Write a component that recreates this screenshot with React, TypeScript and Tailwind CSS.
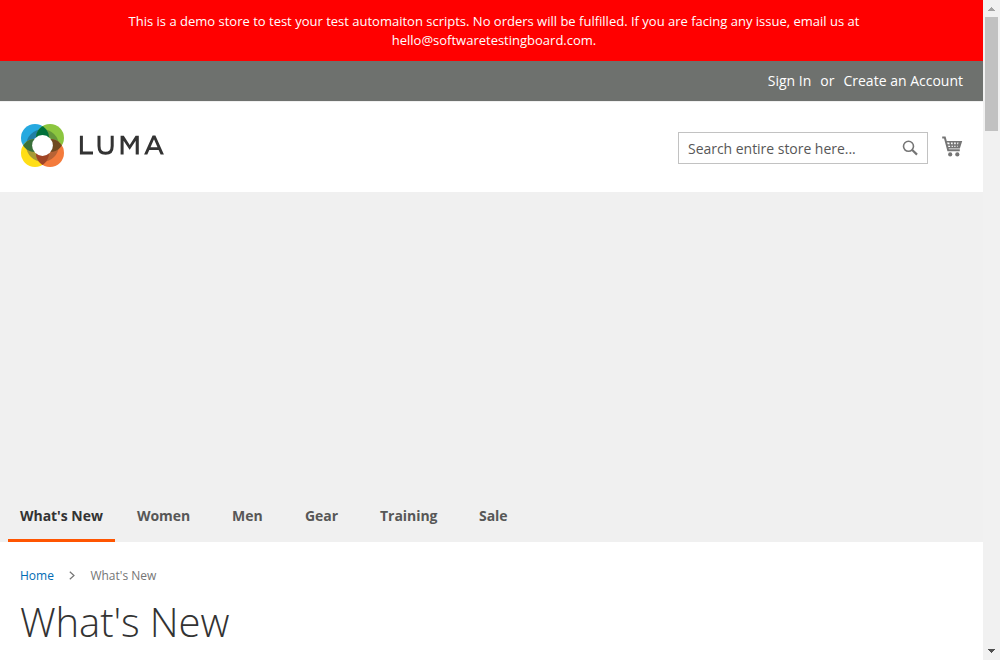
import React from 'react';

const nav = [
  { label: "What's New", className: 'w-[107px] border-b-[3px] border-[#ff5501] text-[#333]' },
  { label: 'Women', className: 'ml-[10px] w-[77px] border-b-[3px] border-transparent text-[#575757]' },
  { label: 'Men', className: 'ml-[18px] w-[55px] border-b-[3px] border-transparent text-[#575757]' },
  { label: 'Gear', className: 'ml-[18px] w-[57px] border-b-[3px] border-transparent text-[#575757]' },
  { label: 'Training', className: 'ml-[18px] w-[81px] border-b-[3px] border-transparent text-[#575757]' },
  { label: 'Sale', className: 'ml-[18px] w-[54px] border-b-[3px] border-transparent text-[#575757]' },
];

function Logo() {
  return (
    <svg className="mt-[22px]" width="148" height="46" viewBox="0 0 148 46">
      <defs>
        <clipPath id="tl"><circle cx="15" cy="15" r="14" /></clipPath>
        <clipPath id="br"><circle cx="30" cy="30" r="14" /></clipPath>
        <clipPath id="ring"><circle cx="22.5" cy="22.5" r="16.3" /></clipPath>
      </defs>
      <circle cx="15" cy="15" r="14" fill="#26a9e0" />
      <circle cx="30" cy="15" r="14" fill="#8cc63f" />
      <circle cx="15" cy="30" r="14" fill="#ffde17" />
      <circle cx="30" cy="30" r="14" fill="#f47b3c" />
      <g clipPath="url(#ring)">
        <circle cx="15" cy="15" r="14" fill="#217fa4" />
        <circle cx="30" cy="15" r="14" fill="#65973a" />
        <circle cx="15" cy="30" r="14" fill="#a79a35" />
        <circle cx="30" cy="30" r="14" fill="#b86335" />
      </g>
      <g clipPath="url(#tl)">
        <circle cx="30" cy="15" r="14" fill="#00703a" />
        <circle cx="15" cy="30" r="14" fill="#39703a" />
      </g>
      <g clipPath="url(#br)">
        <circle cx="30" cy="15" r="14" fill="#704a20" />
        <circle cx="15" cy="30" r="14" fill="#a04525" />
      </g>
      <circle cx="22.5" cy="22.5" r="10.4" fill="#fff" />
      <g fill="none" stroke="#333" strokeWidth="3">
        <path d="M61.4 12.7v17.4H73M79 12.7v10.2c0 5 2.7 7.4 6.6 7.4s6.6-2.4 6.6-7.4V12.7" />
      </g>
      <g fill="#333" fillRule="evenodd">
        <path d="M100.6 31.6V12.7h3.2l5.9 9.2 5.9-9.2h3.2v18.9h-3.1V17.8l-6 9h-.1l-6-9v13.8z" />
        <path d="M124.1 31.6l8.5-19h2.8l8.5 19h-3.3l-2-4.6h-9.3l-2 4.6zM134 16.2l-3.5 8h7z" />
      </g>
    </svg>
  );
}

export default function App() {
  return (
    <div className="flex h-[660px] w-[1000px] overflow-hidden bg-white font-['Open_Sans',sans-serif] text-[14px] text-[#333]">
      <div className="flex w-[983px] flex-col">
        <div className="h-[61px] bg-[#ff0000] pt-[12px] pr-[118px] pl-[123px] text-center text-[13px] leading-[19px] text-white">
          This is a demo store to test your test automaiton scripts. No orders will be fulfilled. If you are facing any issue, email us at
          hello@softwaretestingboard.com.
        </div>
        <div className="flex h-[40px] items-center justify-end bg-[#6e716e] pr-[20px] pb-[2px] text-white">
          <span>Sign In</span>
          <span className="mx-[9px]">or</span>
          <span>Create an Account</span>
        </div>
        <header className="flex h-[91px] items-start justify-between border-t border-[#f0f0f0] pr-[20px] pl-[20px]">
          <div className="-mt-px"><Logo /></div>
          <div className="flex pt-[30px]">
            <div className="flex h-[32px] w-[250px] items-center justify-between border border-[#c2c2c2] pr-[9px] pl-[9px] text-[#575757]">
              <span className="tracking-[-0.03px]">Search entire store here...</span>
              <svg width="16" height="16" viewBox="0 0 16 16" fill="none" stroke="#757575">
                <circle cx="6.5" cy="6.3" r="5" strokeWidth="1.6" />
                <path d="M10 9.8l5 4.8" strokeWidth="2.2" />
              </svg>
            </div>
            <svg className="mt-[4px] ml-[14px]" width="21" height="22" viewBox="0 0 21 22" fill="none" stroke="#757575">
              <path d="M.2 1.4h2.6l3.4 12.8h11.6" strokeWidth="2" />
              <path d="M4.2 5.8h15l-1.9 6H6M5 8.9h13.2M8 6l1.2 6M11.3 6l.4 6M14.6 6l-.5 6M17.4 6l-1.4 6" strokeWidth="1.5" />
              <circle cx="8.2" cy="18.4" r="2.1" fill="#757575" stroke="none" />
              <circle cx="15.3" cy="18.4" r="2.1" fill="#757575" stroke="none" />
            </svg>
          </div>
        </header>
        <div className="flex h-[350px] items-end bg-[#f0f0f0] pl-[8px]">
          {nav.map(({ label, className }) => (
            <div key={label} className={`h-[38px] pl-[12px] leading-[24px] font-bold tracking-[-0.04px] whitespace-nowrap ${className}`}>{label}</div>
          ))}
        </div>
        <main className="px-[20px] pt-[24px]">
          <div className="flex h-[19px] items-center text-[12px] leading-[19px]">
            <span className="text-[#006bb4]">Home</span>
            <svg className="mr-[15px] ml-[15.5px]" width="6" height="9" viewBox="0 0 6 9" fill="none" stroke="#757575" strokeWidth="1.2">
              <path d="M.8.7l4.2 3.8L.8 8.3" />
            </svg>
            <span className="text-[#757575]">What's New</span>
          </div>
          <h1 className="mt-[15px] text-[40px] leading-[44px] font-light tracking-[-0.1px]">What's New</h1>
        </main>
      </div>
      <div className="flex w-[17px] flex-col items-center bg-[#f1f1f1]">
        <div className="flex h-[17px] items-center">
          <svg width="7" height="4" viewBox="0 0 7 4" fill="#a3a3a3" shapeRendering="crispEdges"><path d="M3 0h1v1h1v1h1v1h1v1H0V3h1V2h1V1h1z" /></svg>
        </div>
        <div className="h-[114px] w-[13px] bg-[#c1c1c1]" />
        <div className="mt-auto flex h-[17px] items-center pb-[2px]">
          <svg width="7" height="4" viewBox="0 0 7 4" fill="#505050" shapeRendering="crispEdges"><path d="M0 0h7v1H6v1H5v1H4v1H3V3H2V2H1V1H0z" /></svg>
        </div>
      </div>
    </div>
  );
}
